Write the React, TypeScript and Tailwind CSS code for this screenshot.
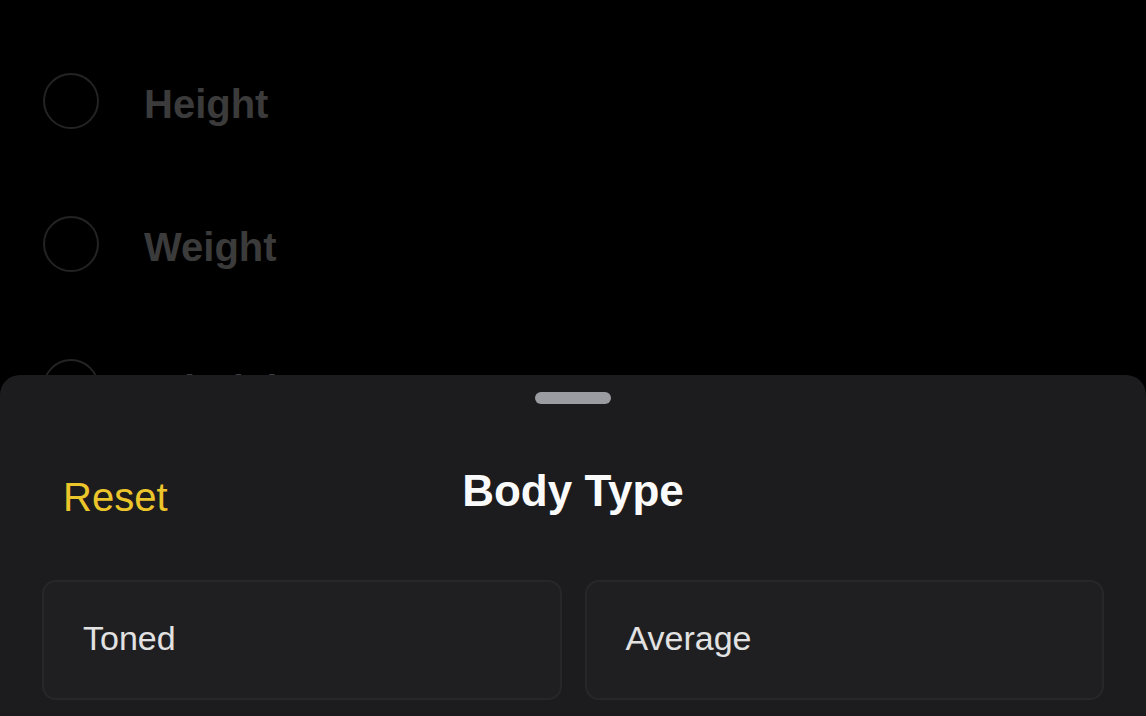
const rows = ["Height", "Weight", "Ethnicity"];
const options = ["Toned", "Average"];

function OptionRow({ label }: { label: string }) {
  return (
    <div className="flex h-[143px] items-center gap-[45px]">
      <div className="size-[56px] shrink-0 rounded-full border-2 border-[#232323]" />
      <span className="mt-[6px] text-[40px] font-bold leading-[48px] text-[#3b3b3b]">{label}</span>
    </div>
  );
}

export default function App() {
  return (
    <div
      className="relative h-[716px] w-full overflow-hidden bg-black"
      style={{ fontFamily: '"Liberation Sans", Arial, sans-serif' }}
    >
      <div className="flex flex-col pl-[43px] pt-[29px]">
        {rows.map((r) => (
          <OptionRow key={r} label={r} />
        ))}
      </div>

      {/* bottom sheet */}
      <div className="absolute inset-x-0 bottom-0 top-[375px] rounded-t-[20px] bg-[#1c1c1e] px-[42px] pt-[17px]">
        <div className="mx-auto h-[12px] w-[76px] rounded-full bg-[#9b9ca1]" />

        <div className="mt-[61px] grid grid-cols-[1fr_auto_1fr] items-start">
          <button className="mt-[8px] justify-self-start pl-[21px] text-[40px] font-medium leading-[48px] text-[#ecc52b]">
            Reset
          </button>
          <h2 className="text-[44px] font-bold leading-[52px] text-[#fafafa]">Body Type</h2>
          <div />
        </div>

        <div className="mt-[59px] grid grid-cols-2 gap-[23px]">
          {options.map((o) => (
            <div
              key={o}
              className="flex h-[120px] items-center rounded-[14px] border-2 border-[#272729] bg-[#1f1f21] pb-[4px] pl-[39px]"
            >
              <span className="text-[34px] leading-[40px] text-[#e2e2e2]">{o}</span>
            </div>
          ))}
        </div>
      </div>
    </div>
  );
}
